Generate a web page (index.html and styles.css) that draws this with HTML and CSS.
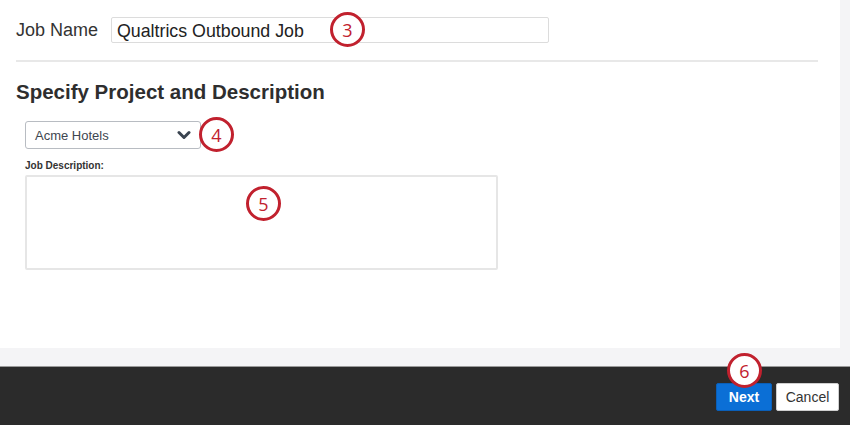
FILE: index.html
```html
<!DOCTYPE html>
<html>
<head>
<meta charset="utf-8">
<link rel="stylesheet" href="styles.css">
</head>
<body>
<div class="page">
  <div class="top">
    <div class="panel">
      <div class="name-row">
        <span class="name-label">Job Name</span>
        <div class="name-input">Qualtrics Outbound Job</div>
      </div>
      <div class="rule"></div>
      <h2 class="heading">Specify Project and Description</h2>
      <div class="section">
        <div class="select">
          <span>Acme Hotels</span>
          <svg class="chev" width="14" height="10" viewBox="0 0 14 10"><path d="M2 2.5 L7 7.5 L12 2.5" fill="none" stroke="#3a4450" stroke-width="3" stroke-linecap="round" stroke-linejoin="round"/></svg>
        </div>
        <div class="desc-label">Job Description:</div>
        <div class="textarea"></div>
      </div>
      <div class="callout c3">3</div>
      <div class="callout c4">4</div>
      <div class="callout c5">5</div>
    </div>
    <div class="side"></div>
  </div>
  <div class="band"></div>
  <div class="footer">
    <button class="btn next">Next</button>
    <button class="btn cancel">Cancel</button>
    <div class="callout c6">6</div>
  </div>
</div>
</body>
</html>
```
FILE: styles.css
```css
html, body {
  margin: 0;
  padding: 0;
  background: #f4f4f6;
  font-family: "Liberation Sans", Arial, sans-serif;
}
.page {
  width: 850px;
  height: 425px;
  display: flex;
  flex-direction: column;
  overflow: hidden;
}
.top {
  display: flex;
  height: 348px;
}
.panel {
  position: relative;
  width: 840px;
  background: #fff;
  padding: 17px 22px 0 16px;
  box-sizing: border-box;
}
.side {
  flex: 1;
  background: #f4f4f6;
}
.name-row {
  display: flex;
  align-items: center;
  height: 26px;
}
.name-label {
  font-size: 18px;
  color: #333;
  width: 95px;
}
.name-input {
  width: 438px;
  height: 26px;
  box-sizing: border-box;
  border: 1px solid #dcdcdc;
  border-radius: 2px;
  font-size: 17.8px;
  color: #222;
  padding: 2px 0 0 5px;
  line-height: 22px;
}
.rule {
  margin-top: 17px;
  height: 2px;
  background: #e8e8e8;
  width: 802px;
}
.heading {
  margin: 17px 0 0 0;
  font-size: 20.5px;
  font-weight: bold;
  color: #2e2e2e;
  line-height: 26px;
}
.section {
  padding-left: 9px;
  margin-top: 16px;
}
.select {
  width: 176px;
  height: 28px;
  box-sizing: border-box;
  border: 1px solid #b8bcc2;
  border-radius: 3px;
  display: flex;
  align-items: center;
  justify-content: space-between;
  padding: 0 9px 0 9px;
  font-size: 13px;
  color: #3e4650;
}
.chev {
  display: block;
}
.desc-label {
  margin-top: 11px;
  font-size: 10px;
  font-weight: bold;
  color: #333;
  line-height: 12px;
}
.textarea {
  margin-top: 3px;
  width: 473px;
  height: 95px;
  box-sizing: border-box;
  border: 2px solid #e6e6e6;
  border-radius: 2px;
}
.band {
  height: 18px;
  background: #f4f4f6;
}
.footer {
  position: relative;
  flex: 1;
  background: #2b2b2b;
  border-top: 1px solid #9a9a9a;
  display: flex;
  justify-content: flex-end;
  align-items: flex-start;
  gap: 4px;
  padding: 16px 11px 0 0;
}
.btn {
  height: 28px;
  border-radius: 2px;
  font-family: "Liberation Sans", Arial, sans-serif;
  font-size: 14px;
  padding: 0;
  cursor: pointer;
}
.next {
  width: 56px;
  background: #0b6fd6;
  border: 1px solid #0a5fb8;
  color: #fff;
  font-weight: bold;
}
.cancel {
  width: 63px;
  background: #fff;
  border: 1px solid #cfcfcf;
  color: #333;
}
.callout {
  position: absolute;
  width: 35px;
  height: 35px;
  box-sizing: border-box;
  border: 3px solid #c1212e;
  border-radius: 50%;
  background: #fff;
  color: #c1212e;
  font-family: "Open Sans", "Liberation Sans", sans-serif;
  font-size: 18px;
  display: flex;
  align-items: center;
  justify-content: center;
  line-height: 1;
}
.c3 { left: 330px; top: 12px; }
.c4 { left: 199px; top: 117px; }
.c5 { left: 246px; top: 186px; }
.c6 { left: 727px; top: -14px; }
```
